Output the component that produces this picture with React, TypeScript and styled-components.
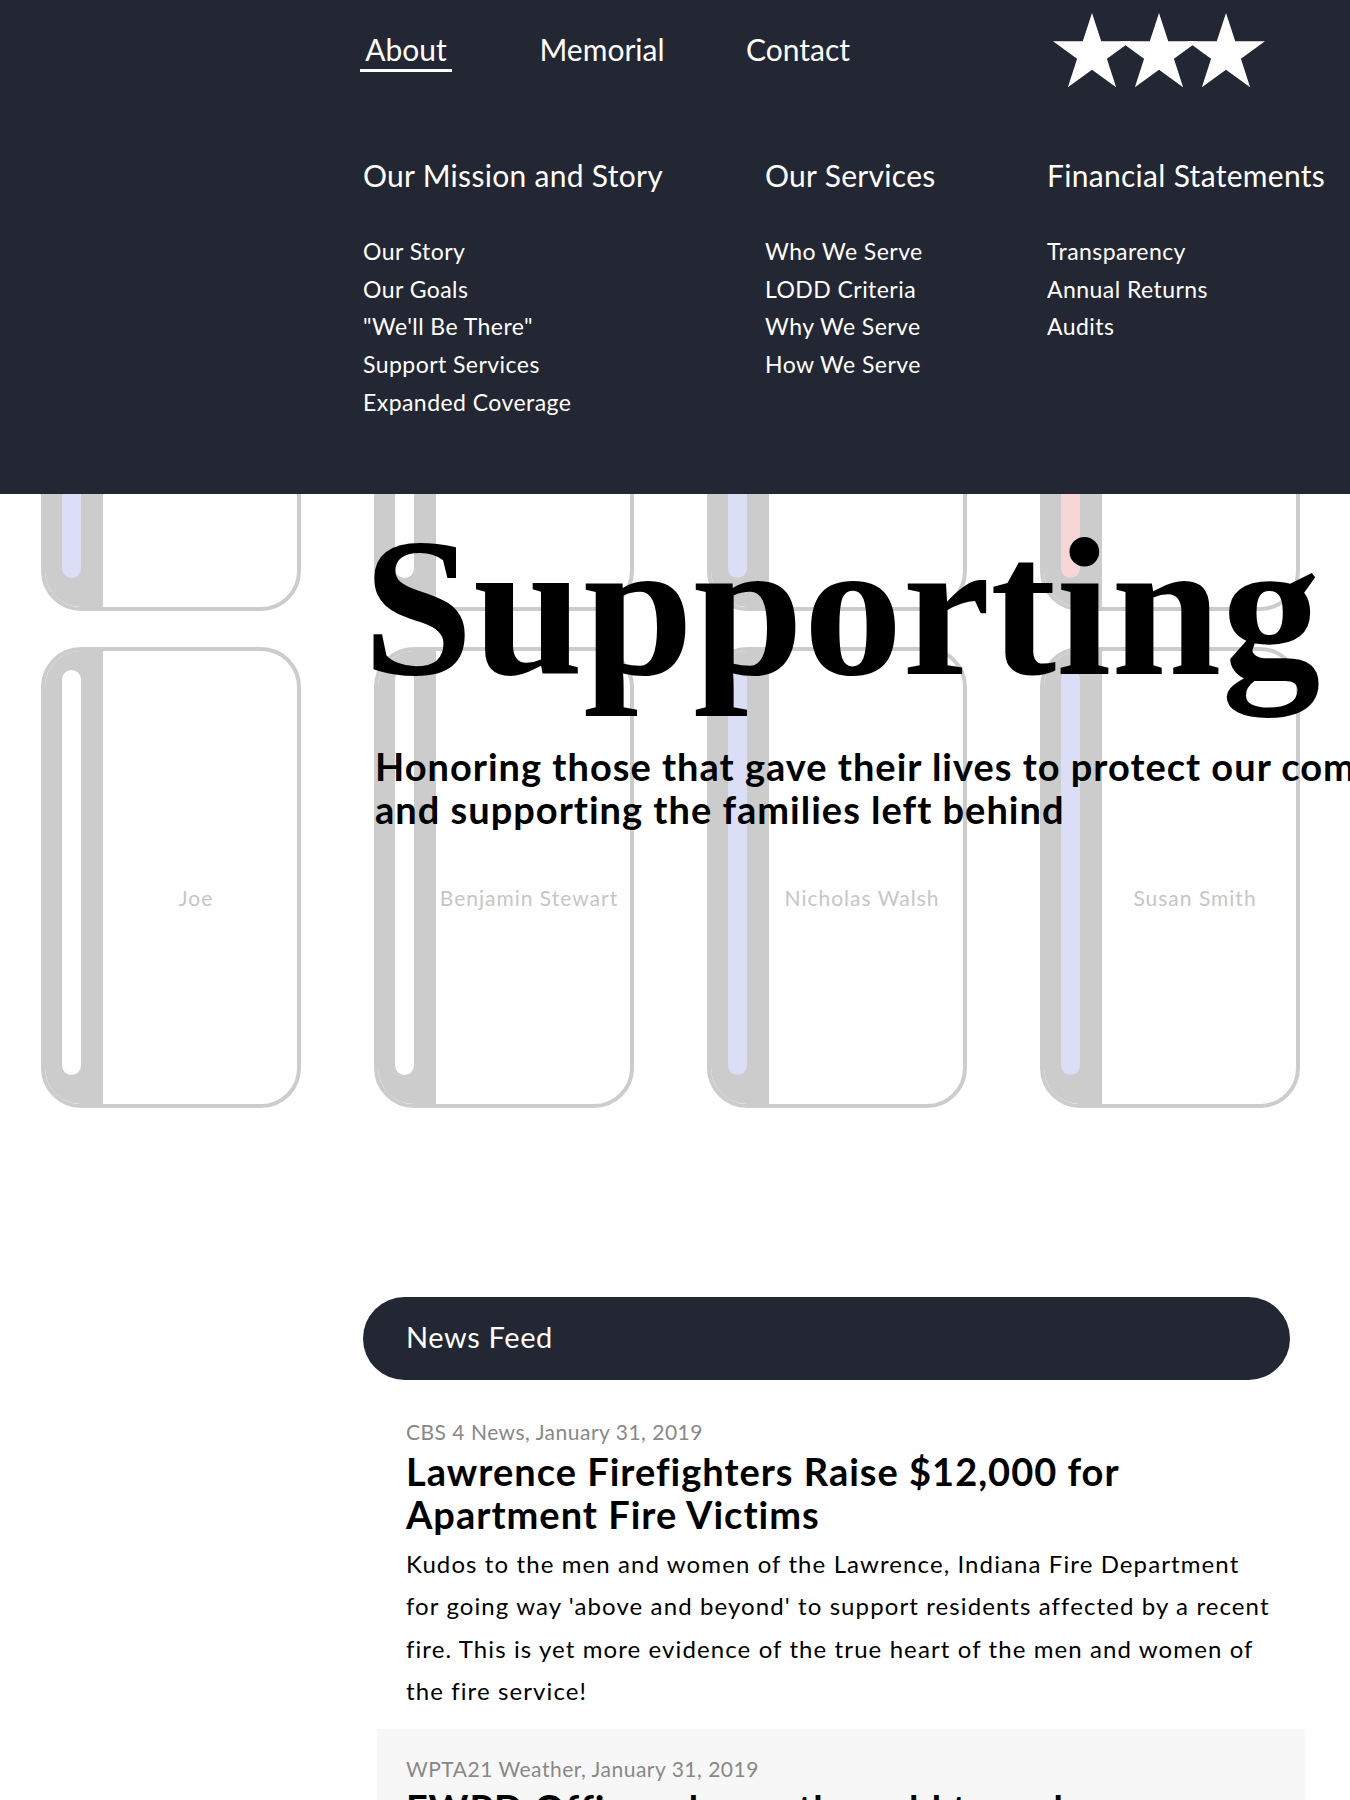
import React from "react";
import styled, { createGlobalStyle } from "styled-components";

const NAVY = "#232733";
const GHOST = "#cccccc";

const GlobalStyle = createGlobalStyle`
  html, body {
    margin: 0;
    padding: 0;
    overflow-x: hidden;
    background: #fff;
  }
  body {
    font-family: "Lato", "Open Sans", sans-serif;
    color: #000;
  }
  * {
    box-sizing: border-box;
  }
`;

const Page = styled.div`
  position: relative;
  width: 1350px;
  overflow: hidden;
  padding-bottom: 120px;
`;

/* ---------- header / menu ---------- */

const Header = styled.header`
  position: absolute;
  top: 0;
  left: 0;
  right: 0;
  height: 494px;
  padding-top: 13px;
  background: ${NAVY};
  color: #fff;
  z-index: 2;
`;

const TopRow = styled.div`
  display: flex;
  align-items: center;
  height: 76px;
  padding: 0 85px 0 308px;
`;

const Nav = styled.nav`
  display: flex;
`;

const NavItem = styled.a`
  width: 196px;
  display: flex;
  justify-content: center;
  font-size: 30px;
  line-height: 36px;
  color: #fff;
  text-decoration: none;
`;

const NavLabel = styled.span<{ $active?: boolean }>`
  padding: 0 5px 2px;
  border-bottom: 3px solid ${(p) => (p.$active ? "#fff" : "transparent")};
`;

const Stars = styled.svg`
  display: block;
  margin-left: auto;
`;

const MenuGrid = styled.div`
  display: grid;
  grid-template-columns: 402px 282px auto;
  margin-top: 68px;
  padding-left: 363px;
`;

const MenuColumn = styled.div`
  display: flex;
  flex-direction: column;
`;

const MenuHeading = styled.h3`
  margin: 0 0 40px;
  font-size: 30px;
  line-height: 36px;
  font-weight: 400;
  letter-spacing: 0.3px;
  white-space: nowrap;
`;

const MenuLink = styled.a`
  display: block;
  font-size: 23px;
  line-height: 37.7px;
  letter-spacing: 0.45px;
  color: #fff;
  text-decoration: none;
`;

/* ---------- memorial wall + hero ---------- */

const Stage = styled.div`
  display: grid;
`;

const CardGrid = styled.div`
  grid-area: 1 / 1;
  display: grid;
  grid-template-columns: repeat(4, 260px);
  column-gap: 73px;
  row-gap: 36px;
  padding: 150px 0 0 41px;
`;

const Card = styled.div`
  height: 461px;
  display: flex;
  border: 4px solid ${GHOST};
  border-radius: 40px;
  overflow: hidden;
  background: #fff;
`;

const Rail = styled.div`
  flex: none;
  width: 58px;
  display: flex;
  padding: 19px 22px 29px 17px;
  background: ${GHOST};
`;

const stripeTone = {
  white: "#ffffff",
  blue: "#dcdef8",
  red: "#f8d6d6",
};

const Stripe = styled.div<{ $tone: keyof typeof stripeTone }>`
  flex: 1;
  border-radius: 10px;
  background: ${(p) => stripeTone[p.$tone]};
`;

const NameArea = styled.div`
  flex: 1;
  display: flex;
  align-items: center;
  justify-content: center;
  padding: 40px 8px 0 0;
  font-size: 21px;
  letter-spacing: 1px;
  color: #c6c6c6;
  white-space: nowrap;
`;

const Hero = styled.div`
  grid-area: 1 / 1;
  position: relative;
  z-index: 1;
  padding: 509px 0 0 363px;
`;

const HeroTitle = styled.h1`
  margin: 0;
  font-family: "Liberation Serif", "Times New Roman", serif;
  font-weight: 700;
  font-size: 198px;
  line-height: 198px;
  white-space: nowrap;
`;

const Tagline = styled.p`
  margin: 38px 0 0 12px;
  font-size: 38px;
  line-height: 42.5px;
  font-weight: 700;
  letter-spacing: 1px;
  white-space: nowrap;
`;

/* ---------- news feed ---------- */

const News = styled.section`
  margin: 189px 0 0 363px;
  width: 942px;
`;

const FeedBar = styled.div`
  width: 927px;
  height: 83px;
  display: flex;
  align-items: center;
  padding: 0 0 5px 43px;
  border-radius: 42px;
  background: ${NAVY};
  color: #fff;
  font-size: 29px;
  letter-spacing: 0.6px;
`;

const FeedList = styled.div`
  width: 928px;
  margin: 12px 0 0 14px;
`;

const FeedItem = styled.article<{ $shaded?: boolean }>`
  padding: 26px 31px 16px 29px;
  background: ${(p) => (p.$shaded ? "#f7f7f7" : "#fff")};
`;

const Source = styled.div`
  font-size: 21px;
  line-height: 28px;
  letter-spacing: 0.5px;
  color: #888;
`;

const Headline = styled.h2`
  margin: 4px 0 0;
  font-size: 38px;
  line-height: 42.5px;
  font-weight: 700;
  letter-spacing: 1px;
`;

const Body = styled.p`
  margin: 8px 0 0;
  font-size: 24px;
  line-height: 42.4px;
  letter-spacing: 1.1px;
`;

const menu = [
  {
    title: "Our Mission and Story",
    links: ["Our Story", "Our Goals", '"We\'ll Be There"', "Support Services", "Expanded Coverage"],
  },
  {
    title: "Our Services",
    links: ["Who We Serve", "LODD Criteria", "Why We Serve", "How We Serve"],
  },
  {
    title: "Financial Statements",
    links: ["Transparency", "Annual Returns", "Audits"],
  },
];

type Tone = keyof typeof stripeTone;

const fallen: { name: string; tone: Tone }[] = [
  { name: "Michael Carter", tone: "blue" },
  { name: "David Reyes", tone: "white" },
  { name: "Thomas Greene", tone: "blue" },
  { name: "Robert Hayes", tone: "red" },
  { name: "Joe", tone: "white" },
  { name: "Benjamin Stewart", tone: "white" },
  { name: "Nicholas Walsh", tone: "blue" },
  { name: "Susan Smith", tone: "blue" },
];

const news = [
  {
    source: "CBS 4 News, January 31, 2019",
    title: "Lawrence Firefighters Raise $12,000 for Apartment Fire Victims",
    body:
      "Kudos to the men and women of the Lawrence, Indiana Fire Department for going way 'above and beyond' to support residents affected by a recent fire. This is yet more evidence of the true heart of the men and women of the fire service!",
  },
  {
    source: "WPTA21 Weather, January 31, 2019",
    title: "FWPD Officers brave the cold to make sure students get home safe",
    body:
      "With wind chills well below zero, officers spent the afternoon checking on kids at bus stops across the city and handing out hats and gloves to anyone who needed them.",
  },
];

// five-point star polygon around (cx, cy)
const starPoints = (cx: number, cy: number, outer: number, inner: number) =>
  Array.from({ length: 10 }, (_, i) => {
    const r = i % 2 === 0 ? outer : inner;
    const a = ((-90 + i * 36) * Math.PI) / 180;
    return `${(cx + r * Math.cos(a)).toFixed(2)},${(cy + r * Math.sin(a)).toFixed(2)}`;
  }).join(" ");

const App: React.FC = () => {
  return (
    <Page>
      <GlobalStyle />
      <Header>
        <TopRow>
          <Nav>
            <NavItem href="#">
              <NavLabel $active>About</NavLabel>
            </NavItem>
            <NavItem href="#">
              <NavLabel>Memorial</NavLabel>
            </NavItem>
            <NavItem href="#">
              <NavLabel>Contact</NavLabel>
            </NavItem>
          </Nav>
          <Stars width="212" height="76" viewBox="0 0 212 76" aria-label="stars">
            {[39, 106, 173].map((cx) => (
              <polygon key={cx} points={starPoints(cx, 41, 41, 15.7)} fill="#fff" />
            ))}
          </Stars>
        </TopRow>
        <MenuGrid>
          {menu.map((col) => (
            <MenuColumn key={col.title}>
              <MenuHeading>{col.title}</MenuHeading>
              {col.links.map((l) => (
                <MenuLink key={l} href="#">
                  {l}
                </MenuLink>
              ))}
            </MenuColumn>
          ))}
        </MenuGrid>
      </Header>

      <Stage>
        <CardGrid>
          {fallen.map((f) => (
            <Card key={f.name}>
              <Rail>
                <Stripe $tone={f.tone} />
              </Rail>
              <NameArea>{f.name}</NameArea>
            </Card>
          ))}
        </CardGrid>
        <Hero>
          <HeroTitle>Supporting</HeroTitle>
          <Tagline>
            Honoring those that gave their lives to protect our communities
            <br />
            and supporting the families left behind
          </Tagline>
        </Hero>
      </Stage>

      <News>
        <FeedBar>News Feed</FeedBar>
        <FeedList>
          {news.map((n, i) => (
            <FeedItem key={n.source} $shaded={i % 2 === 1}>
              <Source>{n.source}</Source>
              <Headline>{n.title}</Headline>
              <Body>{n.body}</Body>
            </FeedItem>
          ))}
        </FeedList>
      </News>
    </Page>
  );
};

export default App;
